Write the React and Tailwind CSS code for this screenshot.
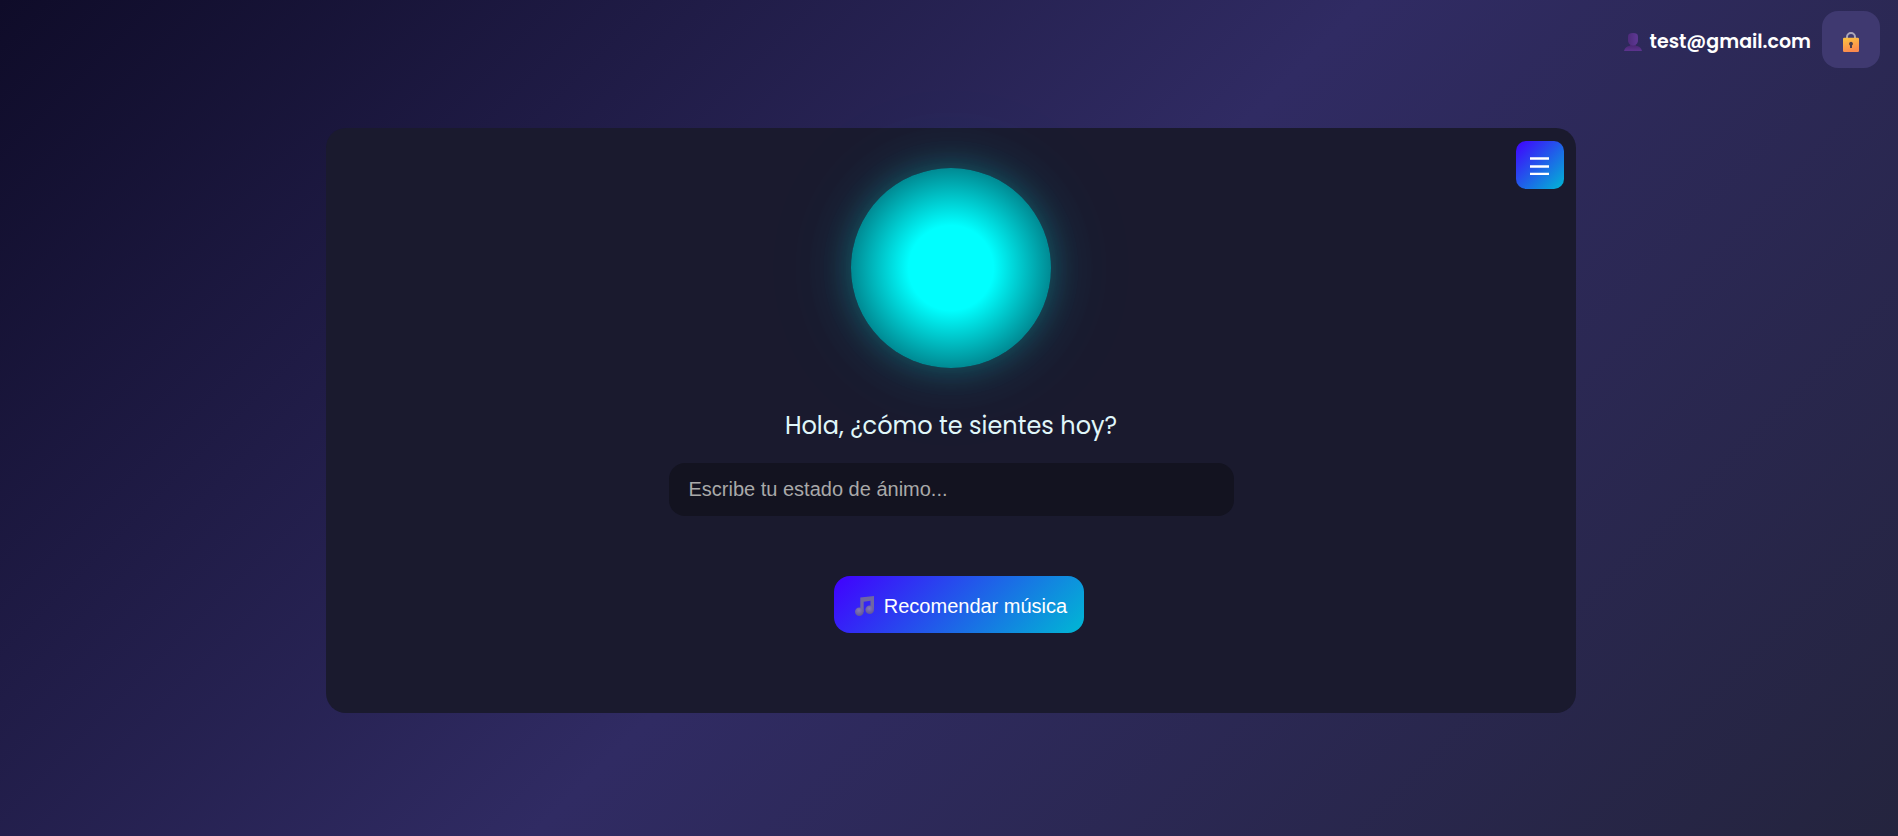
function UserIcon() {
  return (
    <svg viewBox="0 0 18 18" className="size-[18px] shrink-0" aria-hidden="true">
      <defs>
        <linearGradient id="bust" x1="0" y1="0" x2="1" y2="0">
          <stop offset="0" stopColor="#4e2b7b" />
          <stop offset="0.8" stopColor="#5b3690" />
        </linearGradient>
        <linearGradient id="shoulders" x1="0" y1="0" x2="0" y2="1">
          <stop offset="0" stopColor="#45246c" />
          <stop offset="1" stopColor="#5d348f" />
        </linearGradient>
      </defs>
      <path
        fill="url(#shoulders)"
        d="M6 11h6v1.800c3 .4 5.200 2 6 5.200H0c.8-3.200 3-4.800 6-5.200Z"
      />
      <path
        fill="url(#bust)"
        d="M9 0C6 0 4 .8 4 3.500V7.500c0 2.500 2 5 5 5s5-2.500 5-5V3.500C14 .8 12 0 9 0Z"
      />
    </svg>
  );
}

function LockIcon() {
  return (
    <svg viewBox="0 0 16 20" className="h-5 w-4" aria-hidden="true">
      <defs>
        <linearGradient id="lockBody" x1="0" y1="0" x2="0.3" y2="1">
          <stop offset="0" stopColor="#fcc43f" />
          <stop offset="1" stopColor="#fb8a4e" />
        </linearGradient>
      </defs>
      <path d="M4 7V5a4 4 0 0 1 8 0V7" fill="none" stroke="#aaa5b8" strokeWidth="2" />
      <rect x="0" y="5.700" width="16" height="14.300" rx="1.200" fill="url(#lockBody)" />
      <path d="M8 9.700a2 2 0 0 0-1 3.700V16h2v-2.600a2 2 0 0 0-1-3.700Z" fill="#4a3b4a" />
    </svg>
  );
}

function NotesIcon() {
  return (
    <svg viewBox="0 0 19 20" className="h-5 w-[19px] shrink-0" aria-hidden="true">
      <defs>
        <radialGradient id="noteHead" cx="0.45" cy="0.35" r="0.6">
          <stop offset="0" stopColor="#8577b8" />
          <stop offset="1" stopColor="#62599a" />
        </radialGradient>
      </defs>
      <path d="M5.300 1.500 19 0v14h-3.500V4.800L8.700 5.700V16H5.300Z" fill="#6f67a3" />
      <circle cx="4.300" cy="15.700" r="4.300" fill="url(#noteHead)" />
      <circle cx="14.700" cy="13.800" r="4.300" fill="url(#noteHead)" />
    </svg>
  );
}

export default function App() {
  return (
    <div className="flex min-h-screen flex-col bg-[linear-gradient(135deg,#0f0c29,#302b63,#24243e)] font-[Poppins,Inter,sans-serif] text-white">
      <header className="flex items-center justify-end gap-[11px] py-[11px] pr-[18px]">
        <div className="flex items-center gap-2 pt-1 text-[19px] leading-7 font-semibold">
          <UserIcon />
          <span>test@gmail.com</span>
        </div>
        <button
          type="button"
          aria-label="Cerrar sesión"
          className="flex h-[57px] w-[58px] items-center justify-center rounded-2xl bg-[#3f3970] pt-1"
        >
          <LockIcon />
        </button>
      </header>

      <main className="flex justify-center pt-[49px] pb-10 pl-1">
        <section className="relative flex min-h-[585px] w-full max-w-[1250px] flex-col items-center rounded-[20px] bg-[#1a1a2e] pt-10">
          <button
            type="button"
            aria-label="Menú"
            className="absolute top-[13px] right-3 flex size-12 items-center justify-center rounded-[10px] bg-[linear-gradient(135deg,#4100ff,#00b8d4)] pt-0.5"
          >
            <svg viewBox="0 0 20 18" className="h-[18px] w-5" aria-hidden="true">
              <path d="M0 1.500h19M0 9.500h19M0 17h19" stroke="#fff" strokeWidth="2.500" />
            </svg>
          </button>

          <div className="size-[200px] rounded-full bg-[radial-gradient(circle,#00ffff_30%,#008c95_70%)] shadow-[0_0_30px_#00ffff33,0_0_60px_#00ffff22,0_0_120px_#00ffff11]" />

          <label htmlFor="mood" className="mt-10 text-2xl leading-9 text-[#e0f7fa]">
            Hola, ¿cómo te sientes hoy?
          </label>
          <input
            id="mood"
            type="text"
            placeholder="Escribe tu estado de ánimo..."
            className="mt-[19px] h-[53px] w-full max-w-[565px] rounded-2xl bg-[#131320] px-5 font-['Liberation_Sans',sans-serif] text-xl text-white outline-none placeholder:text-[#a9a9a9]"
          />
          <button
            type="button"
            className="mt-[60px] ml-4 flex h-[57px] w-[250px] items-center justify-center gap-[10px] rounded-2xl bg-[linear-gradient(135deg,#4100ff,#00b8d4)] pt-0.5 pl-1 font-['Liberation_Sans',sans-serif] text-xl"
          >
            <NotesIcon />
            Recomendar música
          </button>
        </section>
      </main>
    </div>
  );
}
